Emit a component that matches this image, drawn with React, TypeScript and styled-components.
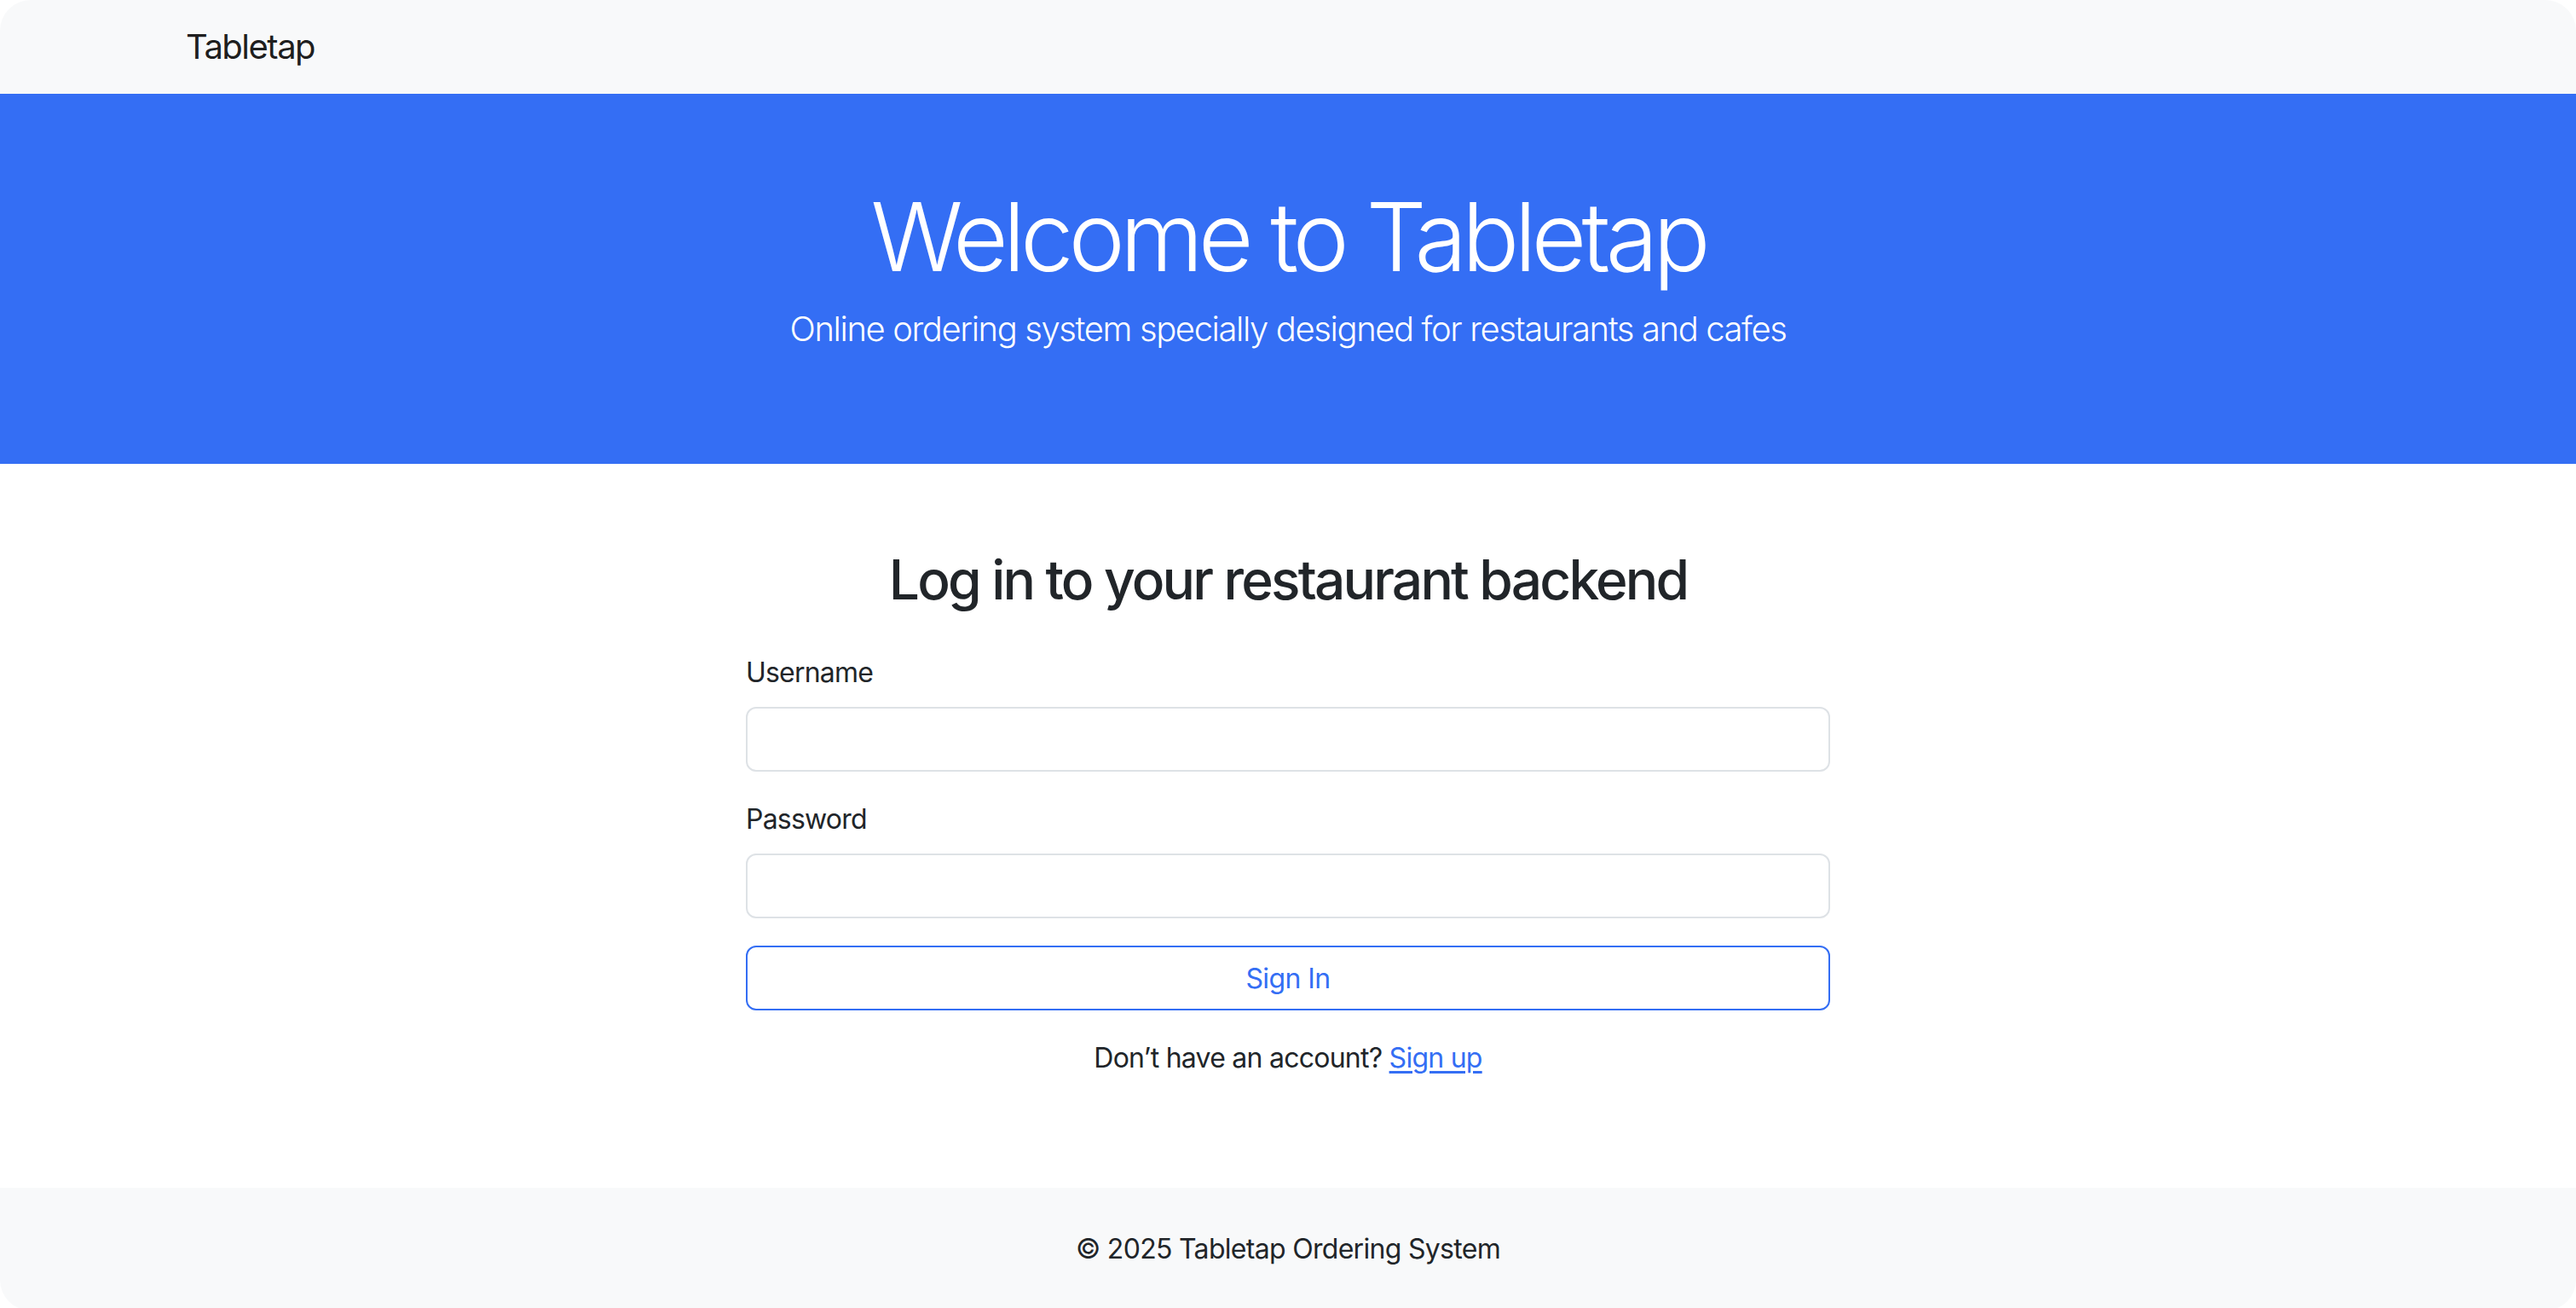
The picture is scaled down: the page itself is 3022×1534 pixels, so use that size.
import React from "react";
import styled, { createGlobalStyle } from "styled-components";

const GlobalStyle = createGlobalStyle`
  html, body {
    margin: 0;
    padding: 0;
    background: #ffffff;
  }
  body {
    font-family: "Inter", "Noto Sans", sans-serif;
    color: #212529;
  }
  * {
    box-sizing: border-box;
  }
`;

const Page = styled.div`
  min-height: 1534px;
  display: flex;
  flex-direction: column;
  border-radius: 36px;
  overflow: hidden;
  background: #ffffff;
`;

const Navbar = styled.nav`
  height: 110px;
  background: #f8f9fa;
  display: flex;
  align-items: center;
  padding-left: 218px;
`;

const Brand = styled.a`
  font-size: 40px;
  line-height: 60px;
  color: rgba(0, 0, 0, 0.9);
  text-decoration: none;
  letter-spacing: -1.5px;
`;

const Hero = styled.header`
  background: #346ef4;
  color: #ffffff;
  text-align: center;
  padding: 96px 0;
`;

const HeroTitle = styled.h1`
  margin: 4px 0 12px;
  font-size: 112px;
  font-weight: 300;
  line-height: 1.2;
  letter-spacing: -6px;
`;

const Lead = styled.p`
  margin: 0 0 32px;
  font-size: 40px;
  font-weight: 300;
  line-height: 1.5;
  letter-spacing: -1.4px;
`;

const Main = styled.main`
  flex: 1;
  padding: 96px 0;
  display: flex;
  justify-content: center;
`;

const FormColumn = styled.div`
  width: 1272px;
`;

const Heading = styled.h2`
  margin: 2px 0 46px;
  text-align: center;
  font-size: 64px;
  font-weight: 500;
  line-height: 1.2;
  letter-spacing: -2.8px;
`;

const Field = styled.div`
  margin-bottom: 32px;
`;

const Label = styled.label`
  display: block;
  margin-bottom: 16px;
  font-size: 32px;
  line-height: 48px;
  letter-spacing: -0.8px;
`;

const Input = styled.input`
  display: block;
  width: 100%;
  height: 76px;
  padding: 12px 24px;
  font-size: 32px;
  font-family: inherit;
  border: 2px solid #dee2e6;
  border-radius: 12px;
  background: #ffffff;
  outline: none;
`;

const OutlineButton = styled.button`
  display: block;
  width: 100%;
  height: 76px;
  font-family: inherit;
  font-size: 32px;
  letter-spacing: -0.6px;
  color: #346ef4;
  background: #ffffff;
  border: 2px solid #346ef4;
  border-radius: 12px;
  cursor: pointer;
`;

const SignupText = styled.p`
  margin: 32px 0 32px;
  text-align: center;
  font-size: 32px;
  line-height: 48px;
  letter-spacing: -0.75px;

  a {
    color: #346ef4;
    text-decoration: underline;
    text-underline-offset: 4px;
  }
`;

const Footer = styled.footer`
  background: #f8f9fa;
  padding: 48px 0;
  text-align: center;
  font-size: 32px;
  line-height: 48px;
  letter-spacing: -0.7px;
`;

export default function App() {
  return (
    <>
      <GlobalStyle />
      <Page>
        <Navbar>
          <Brand href="#">Tabletap</Brand>
        </Navbar>

        <Hero>
          <HeroTitle>Welcome to Tabletap</HeroTitle>
          <Lead>Online ordering system specially designed for restaurants and cafes</Lead>
        </Hero>

        <Main>
          <FormColumn>
            <Heading>Log in to your restaurant backend</Heading>
            <form onSubmit={(e) => e.preventDefault()}>
              <Field>
                <Label htmlFor="username">Username</Label>
                <Input id="username" type="text" />
              </Field>
              <Field>
                <Label htmlFor="password">Password</Label>
                <Input id="password" type="password" />
              </Field>
              <OutlineButton type="submit">Sign In</OutlineButton>
            </form>
            <SignupText>
              Don’t have an account? <a href="#">Sign up</a>
            </SignupText>
          </FormColumn>
        </Main>

        <Footer>© 2025 Tabletap Ordering System</Footer>
      </Page>
    </>
  );
}
